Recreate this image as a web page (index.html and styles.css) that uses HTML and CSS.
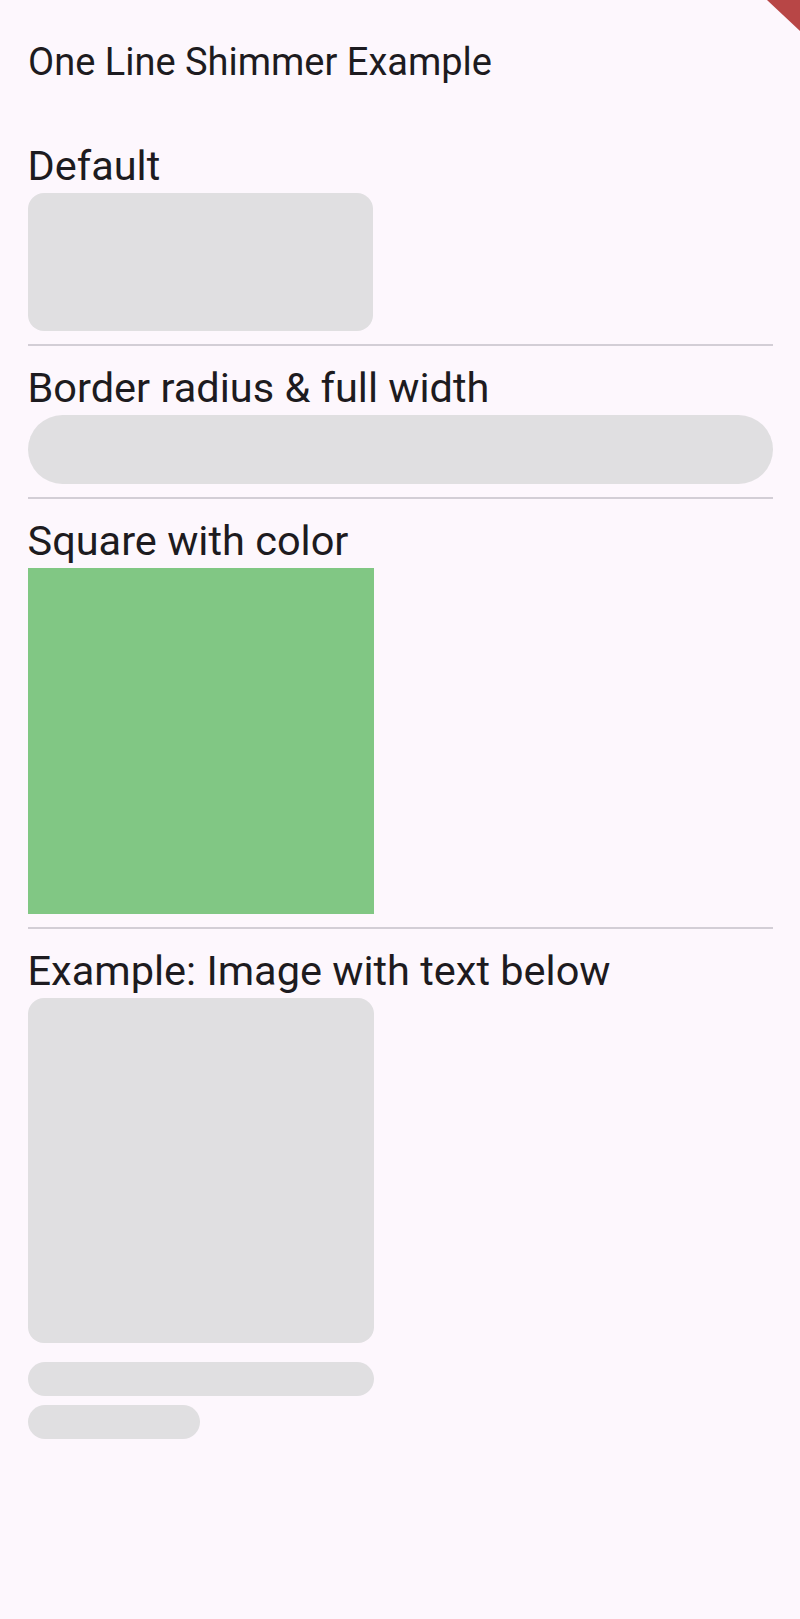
FILE: index.html
```html
<!DOCTYPE html>
<html lang="en">
<head>
<meta charset="utf-8">
<title>One Line Shimmer Example</title>
<link rel="stylesheet" href="styles.css">
</head>
<body>
  <div class="debug-banner"></div>
  <header class="app-bar">
    <h1 class="app-title">One Line Shimmer Example</h1>
  </header>
  <main class="content">
    <section class="section">
      <h2 class="label">Default</h2>
      <div class="shimmer box-default"></div>
    </section>
    <div class="divider"></div>
    <section class="section">
      <h2 class="label">Border radius &amp; full width</h2>
      <div class="shimmer bar-full"></div>
    </section>
    <div class="divider"></div>
    <section class="section">
      <h2 class="label">Square with color</h2>
      <div class="square-green"></div>
    </section>
    <div class="divider"></div>
    <section class="section">
      <h2 class="label">Example: Image with text below</h2>
      <div class="shimmer image-box"></div>
      <div class="shimmer text-line text-line-long"></div>
      <div class="shimmer text-line text-line-short"></div>
    </section>
  </main>
</body>
</html>
```

FILE: styles.css
```css
html, body {
  margin: 0;
  padding: 0;
}

body {
  background: #FDF7FD;
  color: #1D1B20;
  font-family: Roboto, "Noto Sans", "Liberation Sans", sans-serif;
  min-height: 1619px;
  position: relative;
  overflow: hidden;
}

.debug-banner {
  position: absolute;
  top: 0;
  right: 0;
  width: 33px;
  height: 31px;
  background: #B84646;
  clip-path: polygon(0 0, 100% 0, 100% 100%);
  filter: blur(0.6px);
}

.app-bar {
  height: 110px;
  box-sizing: border-box;
  padding: 14px 28px 0;
  display: flex;
  align-items: center;
}

.app-title {
  margin: 0;
  font-size: 38px;
  font-weight: 400;
  line-height: 48px;
}

.content {
  padding: 27.5px 27.5px 0;
  display: flex;
  flex-direction: column;
}

.section {
  display: flex;
  flex-direction: column;
  align-items: flex-start;
}

.label {
  margin: 0;
  font-size: 41.5px;
  font-weight: 400;
  line-height: 55px;
}

.shimmer {
  background: #E0DFE1;
}

.box-default {
  width: 345px;
  height: 138px;
  border-radius: 16px;
}

.divider {
  height: 2px;
  background: #D3CED6;
  margin: 13px 0 14px;
}

.bar-full {
  align-self: stretch;
  height: 69px;
  border-radius: 35px;
}

.square-green {
  width: 346px;
  height: 346px;
  background: #81C784;
}

.image-box {
  width: 346px;
  height: 345px;
  border-radius: 16px;
}

.text-line {
  height: 34px;
  border-radius: 17px;
}

.text-line-long {
  width: 346px;
  margin-top: 19px;
}

.text-line-short {
  width: 172px;
  margin-top: 9px;
}
```
